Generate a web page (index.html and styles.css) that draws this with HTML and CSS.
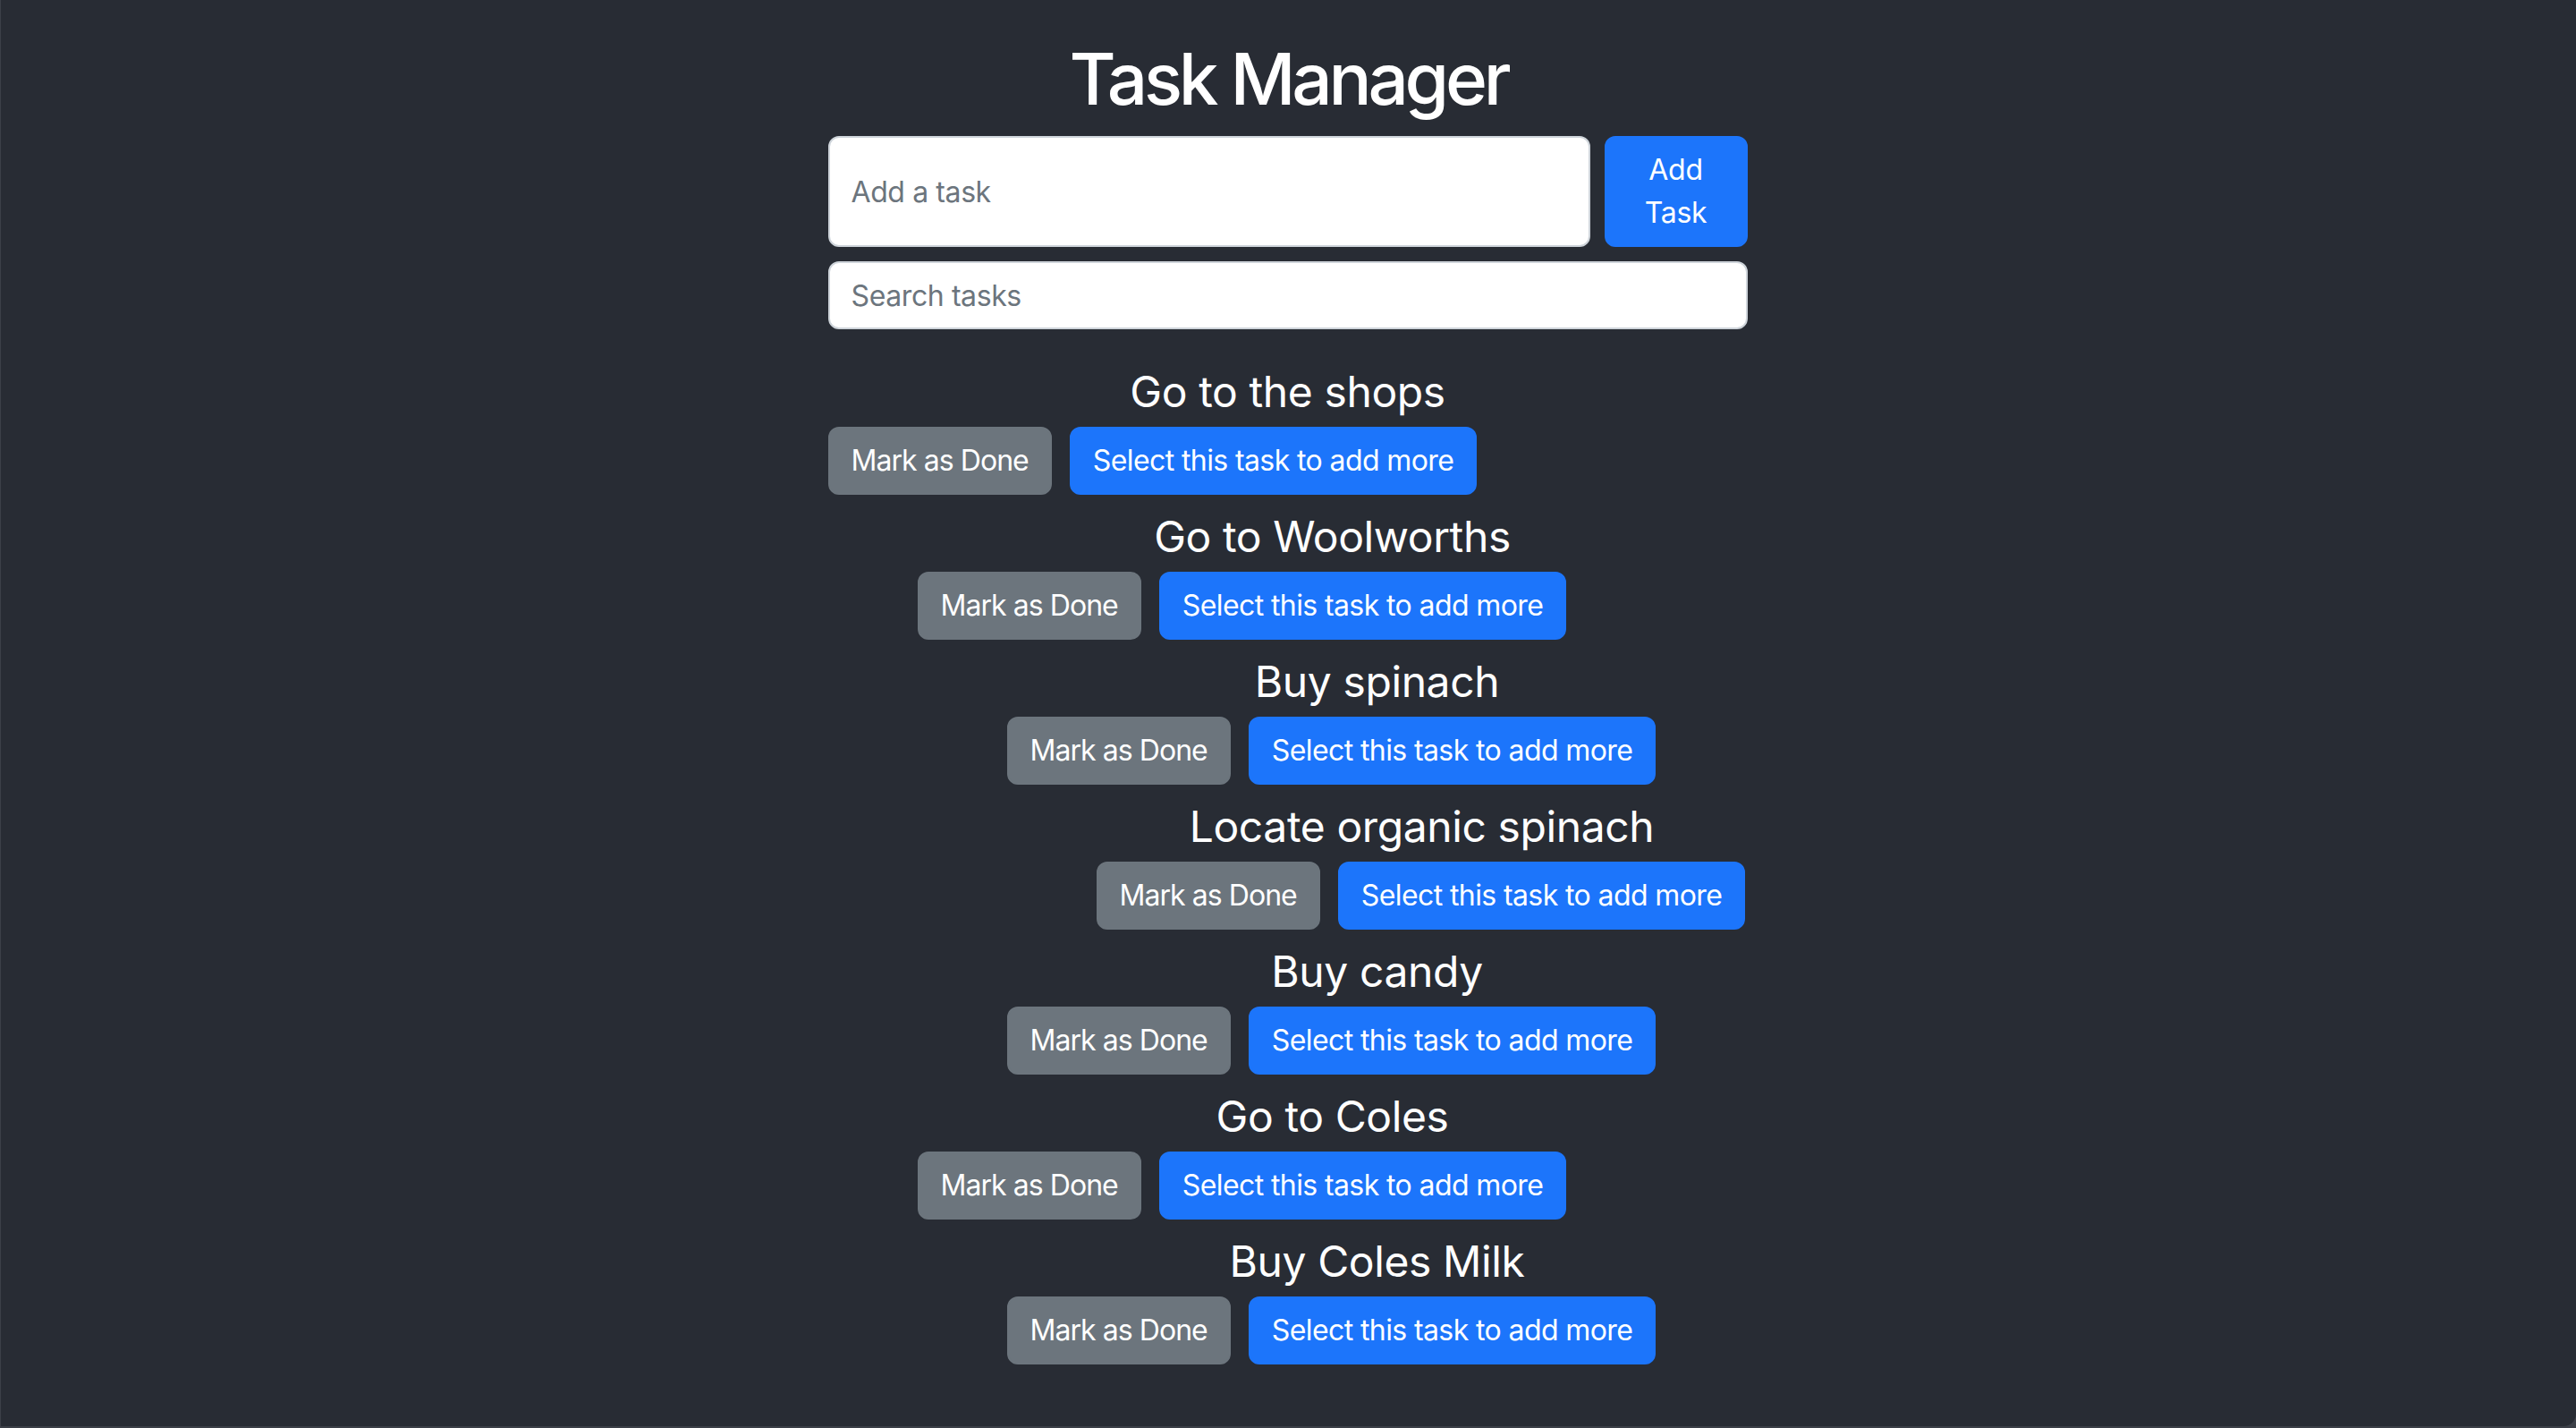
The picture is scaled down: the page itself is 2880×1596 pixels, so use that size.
FILE: index.html
```html
<!DOCTYPE html>
<html lang="en">
<head>
<meta charset="utf-8">
<title>Task Manager</title>
<link rel="stylesheet" href="styles.css">
</head>
<body>
<div class="app">
  <h1 class="title">Task Manager</h1>
  <div class="container">
    <div class="add-row">
      <input class="field field-add" type="text" placeholder="Add a task">
      <button class="btn btn-primary btn-add">Add Task</button>
    </div>
    <input class="field field-search" type="text" placeholder="Search tasks">
    <ul class="tasks">
      <li class="task">
        <h4 class="task-title">Go to the shops</h4>
        <div class="task-actions"><button class="btn btn-secondary">Mark as Done</button><button class="btn btn-primary">Select this task to add more</button></div>
        <ul class="tasks sub">
          <li class="task">
            <h4 class="task-title">Go to Woolworths</h4>
            <div class="task-actions"><button class="btn btn-secondary">Mark as Done</button><button class="btn btn-primary">Select this task to add more</button></div>
            <ul class="tasks sub">
              <li class="task">
                <h4 class="task-title">Buy spinach</h4>
                <div class="task-actions"><button class="btn btn-secondary">Mark as Done</button><button class="btn btn-primary">Select this task to add more</button></div>
                <ul class="tasks sub">
                  <li class="task">
                    <h4 class="task-title">Locate organic spinach</h4>
                    <div class="task-actions"><button class="btn btn-secondary">Mark as Done</button><button class="btn btn-primary">Select this task to add more</button></div>
                  </li>
                </ul>
              </li>
              <li class="task">
                <h4 class="task-title">Buy candy</h4>
                <div class="task-actions"><button class="btn btn-secondary">Mark as Done</button><button class="btn btn-primary">Select this task to add more</button></div>
              </li>
            </ul>
          </li>
          <li class="task">
            <h4 class="task-title">Go to Coles</h4>
            <div class="task-actions"><button class="btn btn-secondary">Mark as Done</button><button class="btn btn-primary">Select this task to add more</button></div>
            <ul class="tasks sub">
              <li class="task">
                <h4 class="task-title">Buy Coles Milk</h4>
                <div class="task-actions"><button class="btn btn-secondary">Mark as Done</button><button class="btn btn-primary">Select this task to add more</button></div>
              </li>
            </ul>
          </li>
        </ul>
      </li>
    </ul>
  </div>
</div>
</body>
</html>
```
FILE: styles.css
```css
html, body {
  margin: 0;
  padding: 0;
}
body {
  background: #3c4048;
  font-family: Inter, "Noto Sans", "Liberation Sans", sans-serif;
  color: #ffffff;
}
.app {
  box-sizing: border-box;
  height: 1594px;
  margin-left: 1px;
  background: #282c34;
  border-bottom-right-radius: 14px;
  padding-top: 40px;
  overflow: hidden;
}
.title {
  margin: 0 0 16px;
  font-size: 80px;
  line-height: 96px;
  font-weight: 500;
  text-align: center;
  letter-spacing: -4.2px;
}
.container {
  width: 1028px;
  margin-left: calc(50% - 515px);
}
.add-row {
  display: flex;
  gap: 16px;
  margin-bottom: 16px;
}
.field {
  box-sizing: border-box;
  display: block;
  font-family: inherit;
  font-size: 32px;
  line-height: 48px;
  padding: 12px 24px;
  border: 2px solid #ced4da;
  border-radius: 12px;
  background: #ffffff;
  color: #212529;
  outline: none;
  letter-spacing: -0.4px;
}
.field::placeholder {
  color: #6c757d;
}
.field-add {
  flex: 1;
  min-width: 0;
  height: 124px;
}
.field-search {
  width: 100%;
  height: 76px;
}
.btn {
  box-sizing: border-box;
  font-family: inherit;
  font-size: 32px;
  line-height: 48px;
  padding: 12px 24px;
  border: 2px solid transparent;
  border-radius: 12px;
  color: #ffffff;
  cursor: pointer;
  letter-spacing: -0.6px;
  white-space: nowrap;
}
.btn-primary {
  background: #1c75fb;
  border-color: #1c75fb;
}
.btn-secondary {
  background: #6c757d;
  border-color: #6c757d;
  letter-spacing: -0.95px;
}
.btn-add {
  width: 160px;
  flex: none;
  white-space: normal;
  letter-spacing: -0.3px;
}
.tasks {
  list-style: none;
  margin: 0;
  padding: 41px 0 0;
}
.tasks.sub {
  padding: 0;
  margin-left: 100px;
}
.task-title {
  margin: 0 0 10px;
  font-size: 48px;
  line-height: 58px;
  font-weight: 400;
  text-align: center;
  letter-spacing: -0.4px;
}
.task-actions {
  display: flex;
  gap: 20px;
  margin-bottom: 18px;
}
```
